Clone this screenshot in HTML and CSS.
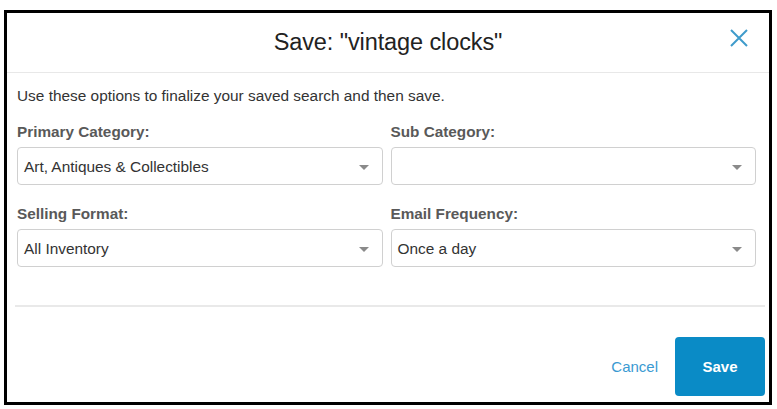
FILE: index.html
```html
<!DOCTYPE html>
<html lang="en">
<head>
<meta charset="utf-8">
<title>Save search</title>
<link rel="stylesheet" href="styles.css">
</head>
<body>
<div class="frame">
  <div class="modal-header">
    <h1 class="modal-title">Save: "vintage clocks"</h1>
    <button class="close" aria-label="Close">
      <svg width="18" height="18" viewBox="0 0 18 18"><path d="M1 1 L17 17 M17 1 L1 17" stroke="#3f9bcb" stroke-width="2" fill="none"/></svg>
    </button>
  </div>
  <div class="modal-body">
    <p class="intro">Use these options to finalize your saved search and then save.</p>
    <div class="fields">
      <div class="field">
        <label class="field-label">Primary Category:</label>
        <div class="select"><span class="select-value">Art, Antiques &amp; Collectibles</span><span class="caret"></span></div>
      </div>
      <div class="field">
        <label class="field-label">Sub Category:</label>
        <div class="select"><span class="select-value"></span><span class="caret"></span></div>
      </div>
      <div class="field">
        <label class="field-label">Selling Format:</label>
        <div class="select"><span class="select-value">All Inventory</span><span class="caret"></span></div>
      </div>
      <div class="field">
        <label class="field-label">Email Frequency:</label>
        <div class="select"><span class="select-value">Once a day</span><span class="caret"></span></div>
      </div>
    </div>
  </div>
  <div class="divider"></div>
  <div class="modal-footer">
    <a class="cancel" href="#">Cancel</a>
    <button class="save">Save</button>
  </div>
</div>
</body>
</html>
```
FILE: styles.css
```css
* { box-sizing: border-box; }
html, body { margin: 0; padding: 0; background: #fff; }
body { font-family: "Liberation Sans", Arial, sans-serif; color: #333; }

.frame {
  width: 768px;
  height: 395px;
  margin: 10px 0 0 4px;
  border: 3px solid #000;
  display: flex;
  flex-direction: column;
  background: #fff;
}

.modal-header {
  height: 60px;
  border-bottom: 1px solid #e8e8e8;
  display: flex;
  align-items: center;
  justify-content: center;
  position: relative;
}
.modal-title {
  margin: 0;
  font-weight: normal;
  font-size: 23.5px;
  color: #222;
  letter-spacing: -0.1px;
}
.close {
  position: absolute;
  right: 21px;
  top: 16px;
  width: 18px;
  height: 18px;
  padding: 0;
  border: 0;
  background: none;
  display: flex;
}

.modal-body {
  padding: 13px 13px 0 10px;
}
.intro {
  margin: 0;
  font-size: 15.4px;
  line-height: 20px;
  color: #333;
}
.fields {
  margin-top: 16px;
  display: grid;
  grid-template-columns: 1fr 1fr;
  column-gap: 8px;
  row-gap: 19px;
}
.field { display: flex; flex-direction: column; }
.field-label {
  font-size: 15.3px;
  font-weight: bold;
  line-height: 20px;
  color: #595959;
  margin-bottom: 5px;
}
.select {
  height: 38px;
  border: 1px solid #d0d0d0;
  border-radius: 4px;
  display: flex;
  align-items: center;
  padding: 2px 13px 0 6px;
}
.select-value {
  flex: 1;
  font-size: 15.4px;
  color: #333;
}
.caret {
  width: 0;
  height: 0;
  border-left: 5px solid transparent;
  border-right: 5px solid transparent;
  border-top: 5px solid #8a8a8a;
}

.divider {
  margin: 38px 4px 0 8px;
  border-top: 2px solid #e9e9e9;
}

.modal-footer {
  flex: 1;
  display: flex;
  justify-content: flex-end;
  align-items: flex-end;
  padding: 0 4px 6px 0;
  gap: 17px;
}
.cancel {
  font-size: 15px;
  color: #3a9ad2;
  text-decoration: none;
  line-height: 59px;
}
.save {
  width: 90px;
  height: 59px;
  border: 0;
  border-radius: 4px;
  background: #0a8bc6;
  color: #fff;
  font-family: "Liberation Sans", Arial, sans-serif;
  font-size: 15px;
  font-weight: bold;
}
```
